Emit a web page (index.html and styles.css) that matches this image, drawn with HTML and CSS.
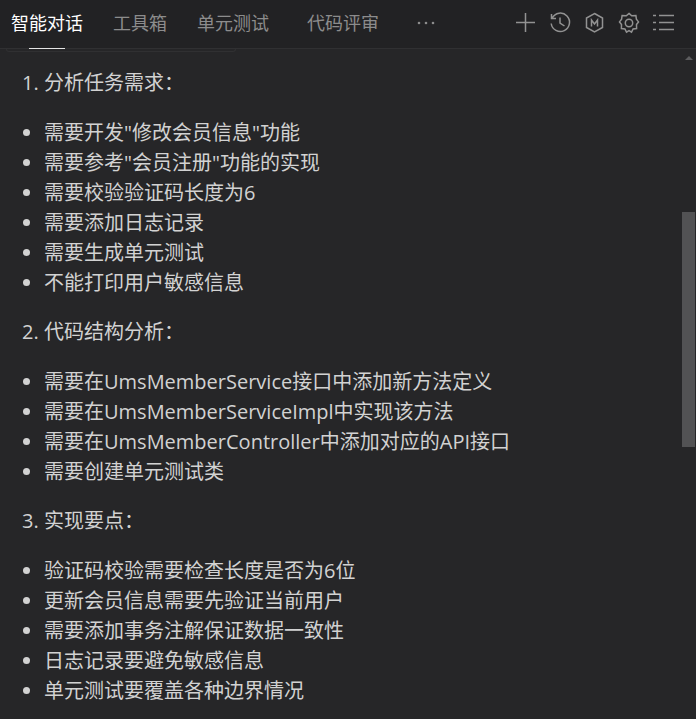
FILE: index.html
```html
<!DOCTYPE html>
<html lang="zh-CN">
<head>
<meta charset="utf-8">
<meta name="viewport" content="width=device-width, initial-scale=1">
<title>智能对话</title>
<link rel="stylesheet" href="styles.css">
</head>
<body>
<header class="topbar">
  <nav class="tabs">
    <button class="tab tab-active" type="button">智能对话</button>
    <button class="tab" type="button">工具箱</button>
    <button class="tab" type="button">单元测试</button>
    <button class="tab tab-last" type="button">代码评审</button>
    <button class="tab tab-more" type="button" aria-label="更多">
      <svg width="18" height="4" viewBox="0 0 18 4"><circle cx="2" cy="2" r="1.3"/><circle cx="9" cy="2" r="1.3"/><circle cx="16" cy="2" r="1.3"/></svg>
    </button>
  </nav>
  <div class="actions">
    <button class="action" type="button" aria-label="新建">
      <svg viewBox="0 0 22 22"><path d="M3 10.500h19M12.500 1v19"/></svg>
    </button>
    <button class="action" type="button" aria-label="历史">
      <svg viewBox="0 0 22 22"><path d="M4.200 6A9.200 9.200 0 1 1 3.200 11.500M3.500 2v4.500h4.500M12 5.500v5.500l4.500 3"/></svg>
    </button>
    <button class="action" type="button" aria-label="模型">
      <svg viewBox="0 0 22 22"><path d="M11.500 1.500l8 4.500v9.500l-8 4.500-8-4.500V6z"/><path d="M8.500 14.500V8l3 4 3-4v6.500"/></svg>
    </button>
    <button class="action" type="button" aria-label="设置">
      <svg viewBox="0 0 22 22"><path d="M11 1.400l2.700 2.300 4.200-.2.500 3.700 2.100 2.700-2 2.600.1 4-3.500.4-1.600 3.200L11 18.700l-2.500 1.400-1.600-3.200-3.500-.4.100-4-2-2.600 2.100-2.700.5-3.700 4.200.2z"/><circle cx="11" cy="11" r="3.700"/></svg>
    </button>
    <button class="action" type="button" aria-label="菜单">
      <svg viewBox="0 0 22 22"><path d="M0 3.500h3M6 3.500h15M0 10.500h3M6 10.500h15M0 17.500h3M6 17.500h15"/></svg>
    </button>
  </div>
</header>
<main class="chat">
  <div class="card-edge"></div>
  <article class="answer">
    <p>1. 分析任务需求：</p>
    <ul>
      <li>需要开发"修改会员信息"功能</li>
      <li>需要参考"会员注册"功能的实现</li>
      <li>需要校验验证码长度为6</li>
      <li>需要添加日志记录</li>
      <li>需要生成单元测试</li>
      <li>不能打印用户敏感信息</li>
    </ul>
    <p>2. 代码结构分析：</p>
    <ul>
      <li>需要在UmsMemberService接口中添加新方法定义</li>
      <li>需要在UmsMemberServiceImpl中实现该方法</li>
      <li>需要在UmsMemberController中添加对应的API接口</li>
      <li>需要创建单元测试类</li>
    </ul>
    <p>3. 实现要点：</p>
    <ul>
      <li>验证码校验需要检查长度是否为6位</li>
      <li>更新会员信息需要先验证当前用户</li>
      <li>需要添加事务注解保证数据一致性</li>
      <li>日志记录要避免敏感信息</li>
      <li>单元测试要覆盖各种边界情况</li>
    </ul>
  </article>
  <div class="scrollbar">
    <svg class="scroll-up" width="8" height="4" viewBox="0 0 8 4"><path d="M4 0l4 4H0z"/></svg>
    <div class="thumb"></div>
  </div>
</main>
</body>
</html>
```

FILE: styles.css
```css
* {
  box-sizing: border-box;
}

body {
  margin: 0;
  min-height: 100vh;
  display: flex;
  flex-direction: column;
  background: #262628;
  color: #d2d2d2;
  font-family: "Open Sans", "Noto Sans CJK SC", sans-serif;
  font-size: 20px;
  line-height: 30px;
}

button {
  padding: 0;
  border: 0;
  background: none;
  color: inherit;
  font: inherit;
}

.topbar {
  display: flex;
  justify-content: space-between;
  height: 49px;
  padding: 0 21px 0 11px;
  border-bottom: 1px solid #303032;
  background: #222224;
}

.tabs {
  display: flex;
  gap: 30px;
}

.tab {
  position: relative;
  height: 48px;
  padding-bottom: 3px;
  color: #8c8c8c;
  font-size: 18px;
  white-space: nowrap;
}

.tab-active {
  color: #fff;
}

.tab-active::after {
  content: "";
  position: absolute;
  bottom: -1px;
  left: 25%;
  width: 50%;
  height: 1px;
  background: #e4e4e4;
}

.tab-last {
  margin: 0 8px;
}

.tab-more {
  display: flex;
  align-items: center;
}

.tab-more svg {
  fill: #8c8c8c;
}

.actions {
  display: flex;
  align-items: center;
  gap: 13px;
  padding-bottom: 2px;
}

.action {
  width: 22px;
  height: 22px;
}

.action svg {
  display: block;
  overflow: visible;
  fill: none;
  stroke: #929292;
  stroke-width: 1.5;
}

.chat {
  position: relative;
  flex: 1;
}

.card-edge {
  width: 230px;
  height: 3px;
  margin-left: 6px;
  border: 1px solid #303032;
  border-top: 0;
  border-radius: 0 0 4px 4px;
}

.answer {
  padding: 16px 24px 12px 22px;
}

.answer p {
  margin: 0 0 20px;
}

.answer ul {
  margin: 0 0 19px;
  padding: 0 0 0 22px;
  list-style: none;
}

.answer ul:last-child {
  margin-bottom: 0;
}

.answer li {
  position: relative;
}

.answer li::before {
  content: "";
  position: absolute;
  top: 11px;
  left: -21px;
  width: 7px;
  height: 7px;
  border-radius: 50%;
  background: #d2d2d2;
}

.scrollbar {
  position: absolute;
  top: 0;
  right: 1px;
  bottom: 0;
  width: 13px;
}

.scroll-up {
  display: block;
  margin: 7px auto 0 3px;
  fill: #5c5c5e;
}

.thumb {
  position: absolute;
  top: 163px;
  width: 100%;
  height: 35%;
  background: #525254;
}
```
